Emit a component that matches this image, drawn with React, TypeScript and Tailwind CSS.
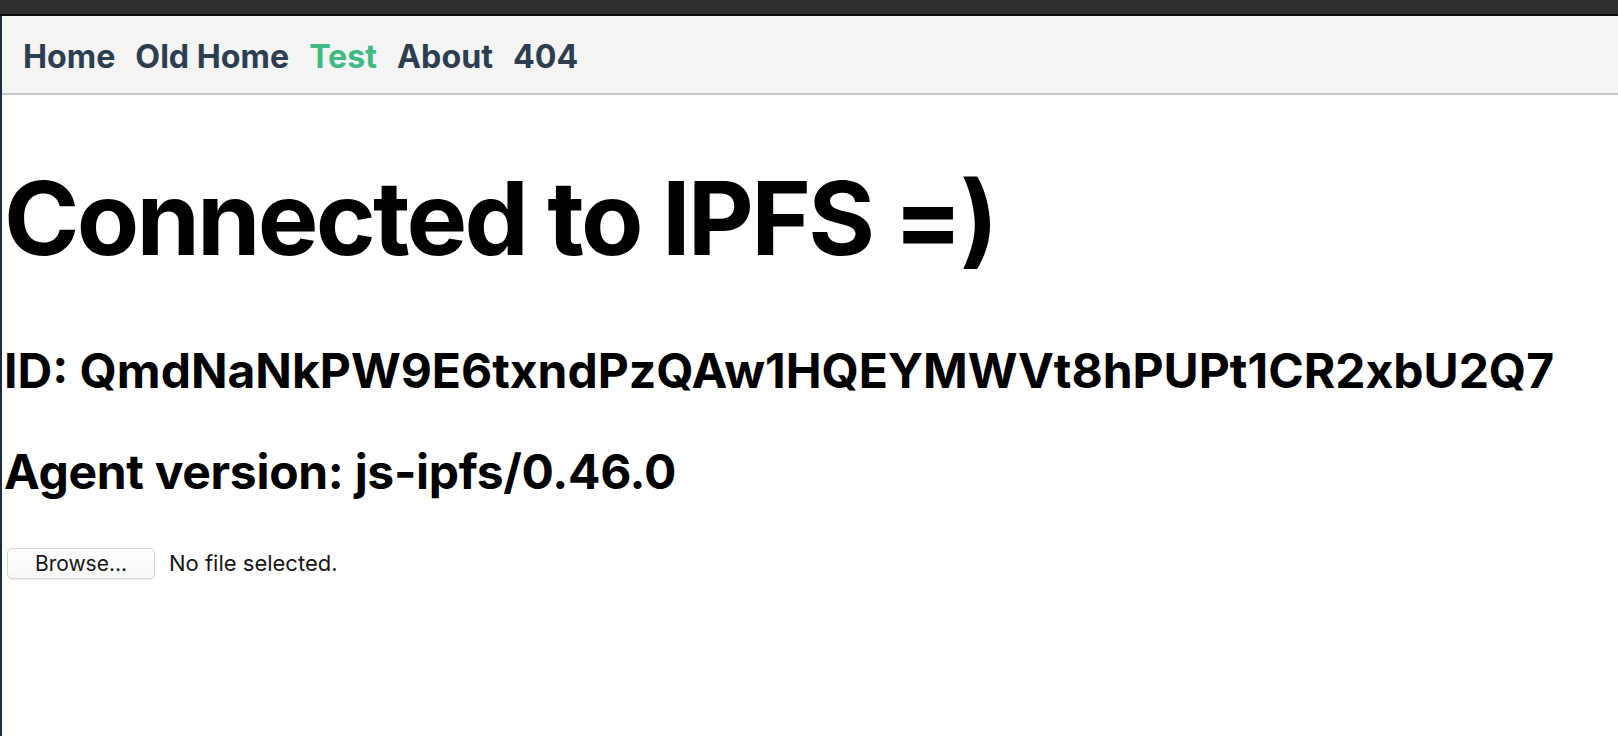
import { useState } from "react";

const links = [
  { name: "Home", active: false },
  { name: "Old Home", active: false },
  { name: "Test", active: true },
  { name: "About", active: false },
  { name: "404", active: false },
];

export default function App() {
  const [fileName, setFileName] = useState<string | null>(null);

  return (
    <div className="min-h-[736px] bg-white font-['Inter',sans-serif]">
      {/* ウィンドウ上部の暗い帯 */}
      <div className="h-[16px] bg-[#2f2f31] border-b-2 border-[#0c0c0c]" />
      <div className="flex min-h-[720px]">
        <div className="w-[2px] bg-[#1f2c3f]" />
        <div className="flex-1">
          <nav className="flex items-center gap-[20px] h-[79px] pt-[6px] pl-[21px] bg-[#f4f4f4] border-b-2 border-[#c6c6c6]">
            {links.map((link) => (
              <a
                key={link.name}
                href="#"
                className={
                  link.active
                    ? "text-[32.2px] font-bold text-[#42b983]"
                    : "text-[32.2px] font-bold text-[#2c3e50]"
                }
              >
                {link.name}
              </a>
            ))}
          </nav>

          <main className="pl-[2px] text-black">
            <h1 className="mt-[63px] text-[102px] leading-[120px] font-bold tracking-[-2.8px]">
              Connected to IPFS =)
            </h1>
            <h2 className="mt-[65px] text-[48px] leading-[56px] font-bold">
              ID: QmdNaNkPW9E6txndPzQAw1HQEYMWVt8hPUPt1CR2xbU2Q7
            </h2>
            <h2 className="mt-[45px] text-[48px] leading-[56px] font-bold tracking-[-0.3px]">
              Agent version: js-ipfs/0.46.0
            </h2>

            <label className="mt-[47px] ml-[3px] flex items-center gap-[14px] w-fit cursor-pointer">
              <span className="flex items-center justify-center w-[148px] h-[31px] rounded-[5px] border border-[#d6d6d6] bg-gradient-to-b from-white to-[#f7f7f7] shadow-[0_1px_1px_rgba(0,0,0,0.06)] text-[21px] text-[#161616]">
                Browse...
              </span>
              <span className="text-[22px] text-[#161616]">
                {fileName ?? "No file selected."}
              </span>
              <input
                type="file"
                className="hidden"
                onChange={(e) => setFileName(e.target.files?.[0]?.name ?? null)}
              />
            </label>
          </main>
        </div>
      </div>
    </div>
  );
}
